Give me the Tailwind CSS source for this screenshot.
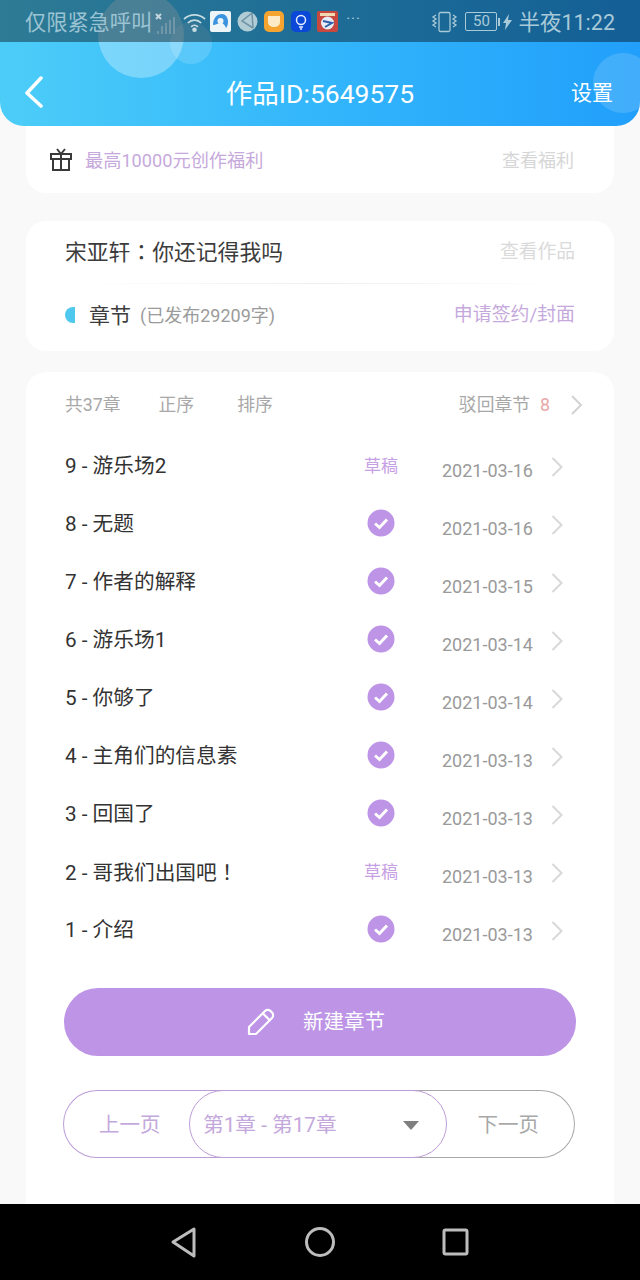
<!DOCTYPE html>
<html lang="zh">
<head>
    <meta charset="UTF-8">
    <title>作品</title>
    <script src="https://cdn.jsdelivr.net/npm/@tailwindcss/browser@4"></script>
</head>
<body class="bg-[#f9f9f9] font-['Roboto','Noto_Sans_CJK_SC',sans-serif]">
<div class="relative w-[640px] h-[1280px] overflow-hidden flex flex-col">

    <!-- header -->
    <header class="relative z-10 h-[126px] shrink-0 rounded-b-[24px] overflow-hidden bg-gradient-to-r from-[#4ccdf8] via-[#33b6fb] to-[#219ffb]">
        <div class="absolute left-[98px] top-[-8px] w-[86px] h-[86px] rounded-full bg-white/30"></div>
        <div class="absolute left-[170px] top-[22px] w-[42px] h-[42px] rounded-full bg-white/15"></div>
        <div class="absolute left-[593px] top-[53px] w-[60px] h-[60px] rounded-full bg-white/15"></div>

        <!-- status bar -->
        <div class="relative h-[42px] bg-black/40 flex items-center pl-[25px] pr-[25px] pt-[3px] text-[#9cc3d3]">
            <span class="text-[21.200px] leading-none">仅限紧急呼叫</span>
            <svg class="ml-[2px] w-[24px] h-[30px]" viewBox="0 0 24 30">
                <path d="M2 6l5 5M7 6l-5 5" stroke="#c4d6dd" stroke-width="2"/>
                <path d="M4 26v-3M8 26v-8M12 26v-11M16 26v-14M20 26v-17" stroke="#6f97a8" stroke-width="2"/>
            </svg>
            <svg class="ml-[5px] w-[23px] h-[24px]" viewBox="0 0 24 24" fill="none" stroke="#c7dbe3" stroke-width="1.800">
                <path d="M1 8c6-6 16-6 22 0M5 12c4-4 10-4 14 0M8.500 16c2-2 5-2 7 0"/>
                <circle cx="12" cy="19" r="1.500" fill="#c7dbe3"/>
            </svg>
            <svg class="ml-[4px] w-[21px] h-[21px] -mt-[2px]" viewBox="0 0 21 21">
                <rect width="21" height="21" rx="2" fill="#eef5f9"/>
                <path d="M3 14C3 6 8 3 12 3s6 4 6 8c0 3-1 5-2 6-1-3-3-5-5-5-3 0-5 2-8 2z" fill="#3b94dd"/>
                <circle cx="10.500" cy="10" r="3" fill="#eef5f9"/>
            </svg>
            <svg class="ml-[6px] w-[21px] h-[21px] -mt-[2px]" viewBox="0 0 21 21">
                <circle cx="10.500" cy="10.500" r="10" fill="#b2ccd6"/>
                <path d="M15 2L5 10l11 7M15 2l1 15" fill="none" stroke="#6f94a5" stroke-width="1.500"/>
            </svg>
            <div class="ml-[6px] -mt-[2px] w-[20px] h-[21px] rounded-[5px] bg-[#f5a52f] flex items-center justify-center">
                <div class="w-[12px] h-[11px] rounded-b-[5px] bg-[#fdebc8]"></div>
            </div>
            <div class="ml-[7px] -mt-[2px] w-[20px] h-[21px] rounded-[5px] bg-[#0b48d8] flex items-center justify-center">
                <svg class="w-[14px] h-[16px]" viewBox="0 0 14 16" fill="none" stroke="#e6efff" stroke-width="1.500"><circle cx="7" cy="6" r="4.500"/><path d="M5 13h4M6 15h2"/></svg>
            </div>
            <svg class="ml-[6px] -mt-[2px] w-[21px] h-[21px]" viewBox="0 0 21 21">
                <rect width="21" height="21" rx="2" fill="#c8473f"/>
                <path d="M3 2h15v3H3z" fill="#f0d9b0"/>
                <circle cx="10.500" cy="12" r="6.500" fill="#e6edf5"/>
                <path d="M6 10l9 2-7 4" fill="none" stroke="#2f5fa8" stroke-width="2"/>
            </svg>
            <span class="ml-[8px] text-[15px] leading-none text-[#b3cfda] tracking-[1px] -mt-[6px]">···</span>
            <svg class="ml-auto w-[27px] h-[22px] -mt-[2px]" viewBox="0 0 27 22" fill="none" stroke="#a9cad8" stroke-width="1.300">
                <rect x="8" y="1.500" width="11" height="19" rx="1.500"/>
                <path d="M5 4L2 6l3 2-3 2 3 2-3 2 3 2M22 4l3 2-3 2 3 2-3 2 3 2-3 2"/>
            </svg>
            <div class="ml-[7px] -mt-[2px] w-[32px] h-[19px] rounded-[2px] border border-[#a9cad8] flex items-center justify-center text-[15px] leading-none text-[#a9cad8]">50</div>
            <div class="ml-[1px] -mt-[2px] w-[2px] h-[8px] bg-[#a9cad8]"></div>
            <svg class="ml-[3px] -mt-[2px] w-[9px] h-[16px]" viewBox="0 0 9 16"><path d="M6 0L0 9h3l-1 7 7-10H5z" fill="#a9cad8"/></svg>
            <span class="ml-[6px] text-[21.500px] leading-none text-[#a9cad8]">半夜11:22</span>
        </div>

        <!-- title bar -->
        <div class="relative h-[84px] flex items-center justify-center text-white">
            <svg class="absolute left-[24px] top-[34px] w-[20px] h-[32px]" viewBox="0 0 20 32" fill="none" stroke="#fff" stroke-width="3.500" stroke-linecap="round" stroke-linejoin="round">
                <path d="M17 2L3 17l14 13"/>
            </svg>
            <span class="mt-[20px] text-[26.500px] leading-none">作品ID:5649575</span>
            <span class="absolute right-[27px] top-[41px] text-[21px] leading-none">设置</span>
        </div>
    </header>

    <main class="relative flex-1 px-[26px] flex flex-col">
        <!-- welfare card -->
        <section class="h-[67px] bg-white rounded-b-[20px] flex items-center pl-[24px] pr-[40px]">
            <svg class="w-[22px] h-[24px]" viewBox="0 0 22 24" fill="none" stroke="#3a3a3a" stroke-width="2">
                <rect x="1" y="6" width="20" height="5"/>
                <path d="M3 11v11h16V11M11 6v16M7 1l4 5 4-5"/>
            </svg>
            <span class="ml-[13px] mt-[3px] text-[18.200px] leading-none text-[#c6a9dc]">最高10000元创作福利</span>
            <span class="ml-auto mt-[3px] text-[18px] leading-none text-[#d6d6d6]">查看福利</span>
        </section>

        <!-- work card -->
        <section class="mt-[28px] h-[130px] bg-white rounded-[20px] px-[39px] flex flex-col">
            <div class="h-[62px] flex items-center justify-between">
                <span class="text-[21.800px] leading-none text-[#3c3c3c]">宋亚轩<span lang="zh-Hant" class="font-['Noto_Sans_CJK_TC']">：</span>你还记得我吗</span>
                <span class="text-[18.800px] leading-none text-[#dadada]">查看作品</span>
            </div>
            <div class="h-px mx-[16px] bg-gradient-to-r from-white via-[#eeeeee] to-white"></div>
            <div class="h-[61px] flex items-center">
                <div class="w-[10px] h-[16px] mt-[1px] rounded-l-full bg-[#4fc8ef]"></div>
                <span class="ml-[14px] mt-[3px] text-[21px] leading-none text-[#3c3c3c]">章节</span>
                <span class="ml-[9px] mt-[3px] text-[18px] leading-none text-[#9b9b9b]">(已发布29209字)</span>
                <span class="ml-auto mt-[2px] text-[18.900px] leading-none text-[#c6a9dc]">申请签约/封面</span>
            </div>
        </section>

        <!-- chapter list -->
        <section class="mt-[21px] flex-1 bg-white rounded-t-[20px] pl-[39px] pr-[38px]">
            <div class="h-[66px] pb-[1px] flex items-center text-[17.800px] leading-none text-[#a8a8a8]">
                <span>共37章</span>
                <span class="ml-[38px]">正序</span>
                <span class="ml-[43px]">排序</span>
                <span class="ml-auto">驳回章节</span>
                <span class="ml-[10px] text-[#e7a7a7]">8</span>
                <svg class="ml-[20px] -mr-[7px] w-[13px] h-[20px]" viewBox="0 0 13 20" fill="none" stroke="#d2d2d2" stroke-width="2"><path d="M2 1l9 9-9 9"/></svg>
            </div>

            <ul class="flex flex-col">
                <li class="h-[58px] flex items-center">
                    <span class="flex-1 -mt-[2px] text-[20.700px] leading-none text-[#333]">9 - 游乐场2</span>
                    <span class="w-[34px] text-[17px] leading-none text-[#c6a0e4] -mt-[2px] mr-[44px]">草稿</span>
                    <span class="w-[91px] mt-[8px] text-[18px] leading-none text-[#9a9a9a]">2021-03-16</span>
                    <svg class="ml-[18px] mr-[13px] w-[12px] h-[20px]" viewBox="0 0 12 20" fill="none" stroke="#d8d8d8" stroke-width="2"><path d="M1.500 1l9 9-9 9"/></svg>
                </li>
                <li class="h-[58px] flex items-center">
                    <span class="flex-1 -mt-[2px] text-[20.700px] leading-none text-[#333]">8 - 无题</span>
                    <svg class="w-[28px] h-[28px] -mt-[4px] mr-[47px]" viewBox="0 0 28 28"><circle cx="14" cy="14" r="13.500" fill="#bd94e6"/><path d="M8 14.500l4.500 4 7.500-8" fill="none" stroke="#fff" stroke-width="3"/></svg>
                    <span class="w-[91px] mt-[8px] text-[18px] leading-none text-[#9a9a9a]">2021-03-16</span>
                    <svg class="ml-[18px] mr-[13px] w-[12px] h-[20px]" viewBox="0 0 12 20" fill="none" stroke="#d8d8d8" stroke-width="2"><path d="M1.500 1l9 9-9 9"/></svg>
                </li>
                <li class="h-[58px] flex items-center">
                    <span class="flex-1 -mt-[2px] text-[20.700px] leading-none text-[#333]">7 - 作者的解释</span>
                    <svg class="w-[28px] h-[28px] -mt-[4px] mr-[47px]" viewBox="0 0 28 28"><circle cx="14" cy="14" r="13.500" fill="#bd94e6"/><path d="M8 14.500l4.500 4 7.500-8" fill="none" stroke="#fff" stroke-width="3"/></svg>
                    <span class="w-[91px] mt-[8px] text-[18px] leading-none text-[#9a9a9a]">2021-03-15</span>
                    <svg class="ml-[18px] mr-[13px] w-[12px] h-[20px]" viewBox="0 0 12 20" fill="none" stroke="#d8d8d8" stroke-width="2"><path d="M1.500 1l9 9-9 9"/></svg>
                </li>
                <li class="h-[58px] flex items-center">
                    <span class="flex-1 -mt-[2px] text-[20.700px] leading-none text-[#333]">6 - 游乐场1</span>
                    <svg class="w-[28px] h-[28px] -mt-[4px] mr-[47px]" viewBox="0 0 28 28"><circle cx="14" cy="14" r="13.500" fill="#bd94e6"/><path d="M8 14.500l4.500 4 7.500-8" fill="none" stroke="#fff" stroke-width="3"/></svg>
                    <span class="w-[91px] mt-[8px] text-[18px] leading-none text-[#9a9a9a]">2021-03-14</span>
                    <svg class="ml-[18px] mr-[13px] w-[12px] h-[20px]" viewBox="0 0 12 20" fill="none" stroke="#d8d8d8" stroke-width="2"><path d="M1.500 1l9 9-9 9"/></svg>
                </li>
                <li class="h-[58px] flex items-center">
                    <span class="flex-1 -mt-[2px] text-[20.700px] leading-none text-[#333]">5 - 你够了</span>
                    <svg class="w-[28px] h-[28px] -mt-[4px] mr-[47px]" viewBox="0 0 28 28"><circle cx="14" cy="14" r="13.500" fill="#bd94e6"/><path d="M8 14.500l4.500 4 7.500-8" fill="none" stroke="#fff" stroke-width="3"/></svg>
                    <span class="w-[91px] mt-[8px] text-[18px] leading-none text-[#9a9a9a]">2021-03-14</span>
                    <svg class="ml-[18px] mr-[13px] w-[12px] h-[20px]" viewBox="0 0 12 20" fill="none" stroke="#d8d8d8" stroke-width="2"><path d="M1.500 1l9 9-9 9"/></svg>
                </li>
                <li class="h-[58px] flex items-center">
                    <span class="flex-1 -mt-[2px] text-[20.700px] leading-none text-[#333]">4 - 主角们的信息素</span>
                    <svg class="w-[28px] h-[28px] -mt-[4px] mr-[47px]" viewBox="0 0 28 28"><circle cx="14" cy="14" r="13.500" fill="#bd94e6"/><path d="M8 14.500l4.500 4 7.500-8" fill="none" stroke="#fff" stroke-width="3"/></svg>
                    <span class="w-[91px] mt-[8px] text-[18px] leading-none text-[#9a9a9a]">2021-03-13</span>
                    <svg class="ml-[18px] mr-[13px] w-[12px] h-[20px]" viewBox="0 0 12 20" fill="none" stroke="#d8d8d8" stroke-width="2"><path d="M1.500 1l9 9-9 9"/></svg>
                </li>
                <li class="h-[58px] flex items-center">
                    <span class="flex-1 -mt-[2px] text-[20.700px] leading-none text-[#333]">3 - 回国了</span>
                    <svg class="w-[28px] h-[28px] -mt-[4px] mr-[47px]" viewBox="0 0 28 28"><circle cx="14" cy="14" r="13.500" fill="#bd94e6"/><path d="M8 14.500l4.500 4 7.500-8" fill="none" stroke="#fff" stroke-width="3"/></svg>
                    <span class="w-[91px] mt-[8px] text-[18px] leading-none text-[#9a9a9a]">2021-03-13</span>
                    <svg class="ml-[18px] mr-[13px] w-[12px] h-[20px]" viewBox="0 0 12 20" fill="none" stroke="#d8d8d8" stroke-width="2"><path d="M1.500 1l9 9-9 9"/></svg>
                </li>
                <li class="h-[58px] flex items-center">
                    <span class="flex-1 -mt-[2px] text-[20.700px] leading-none text-[#333]">2 - 哥我们出国吧<span lang="zh-Hant" class="font-['Noto_Sans_CJK_TC']">！</span></span>
                    <span class="w-[34px] text-[17px] leading-none text-[#c6a0e4] -mt-[2px] mr-[44px]">草稿</span>
                    <span class="w-[91px] mt-[8px] text-[18px] leading-none text-[#9a9a9a]">2021-03-13</span>
                    <svg class="ml-[18px] mr-[13px] w-[12px] h-[20px]" viewBox="0 0 12 20" fill="none" stroke="#d8d8d8" stroke-width="2"><path d="M1.500 1l9 9-9 9"/></svg>
                </li>
                <li class="h-[58px] flex items-center">
                    <span class="flex-1 -mt-[2px] text-[20.700px] leading-none text-[#333]">1 - 介绍</span>
                    <svg class="w-[28px] h-[28px] -mt-[4px] mr-[47px]" viewBox="0 0 28 28"><circle cx="14" cy="14" r="13.500" fill="#bd94e6"/><path d="M8 14.500l4.500 4 7.500-8" fill="none" stroke="#fff" stroke-width="3"/></svg>
                    <span class="w-[91px] mt-[8px] text-[18px] leading-none text-[#9a9a9a]">2021-03-13</span>
                    <svg class="ml-[18px] mr-[13px] w-[12px] h-[20px]" viewBox="0 0 12 20" fill="none" stroke="#d8d8d8" stroke-width="2"><path d="M1.500 1l9 9-9 9"/></svg>
                </li>
            </ul>

            <button class="mt-[28px] w-[512px] -ml-[1px] h-[68px] rounded-full bg-[#bd94e6] flex items-center justify-center text-white">
                <svg class="-ml-[8px] w-[28px] h-[28px]" viewBox="0 0 28 28" fill="none" stroke="#fff" stroke-width="2.200" stroke-linejoin="round">
                    <path d="M2 26v-7L18 3c1.500-1.500 4-1.500 5.500 0L25 4.500c1.500 1.500 1.500 4 0 5.500L9 26z"/>
                    <path d="M16 5.500l7 7"/>
                </svg>
                <span class="ml-[28px] text-[20.500px] leading-none">新建章节</span>
            </button>

            <!-- pager -->
            <div class="relative mt-[34px] -ml-[2px] w-[512px] h-[68px] flex">
                <div class="w-[256px] rounded-l-full border border-r-0 border-[#bd9dd8] flex items-center">
                    <span class="ml-[35px] mt-[3px] text-[20.500px] leading-none text-[#c4a8dc]">上一页</span>
                </div>
                <div class="w-[256px] rounded-r-full border border-l-0 border-[#a8a8a8] flex items-center justify-end">
                    <span class="mr-[35px] mt-[3px] text-[20.500px] leading-none text-[#a8a8a8]">下一页</span>
                </div>
                <div class="absolute left-[126px] top-0 w-[258px] h-[68px] rounded-full border-[1.500px] border-[#bd9dd8] bg-white flex items-center pl-[13px]">
                    <span class="mt-[3px] text-[20.700px] leading-none text-[#c4a8dc]">第1章 - 第17章</span>
                    <div class="absolute left-[213px] top-[30px] w-0 h-0 border-x-[8px] border-x-transparent border-t-[9px] border-t-[#7f7f7f]"></div>
                </div>
            </div>
        </section>
    </main>

    <!-- nav bar -->
    <nav class="relative h-[76px] shrink-0 bg-black flex items-center justify-center">
        <svg class="w-[326px] h-[40px]" viewBox="0 0 326 40" fill="none" stroke="#bdbdbd" stroke-width="3" stroke-linejoin="round">
            <path d="M37 7v27L16 20z"/>
            <circle cx="163" cy="20" r="13.500"/>
            <rect x="287" y="8" width="23" height="24" rx="1.500"/>
        </svg>
    </nav>
</div>
</body>
</html>
